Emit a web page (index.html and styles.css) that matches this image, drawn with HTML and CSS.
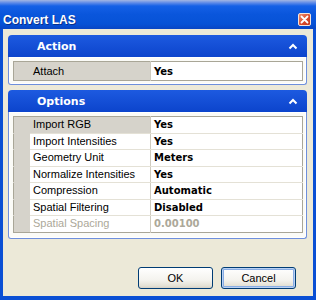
FILE: index.html
```html
<!DOCTYPE html>
<html lang="en">
<head>
    <meta charset="UTF-8">
    <title>Convert LAS</title>
    <link rel="stylesheet" href="styles.css">
</head>
<body>

    <div class="ventana">
        <div class="barra-titulo">
            <span class="titulo">Convert LAS</span>
            <span class="cerrar">
                <svg width="9" height="9" viewBox="0 0 9 9">
                    <path d="M1.5 1.5 L7.5 7.5 M7.5 1.5 L1.5 7.5" stroke="#fff" stroke-width="1.8" stroke-linecap="round"/>
                </svg>
            </span>
        </div>

        <div class="cliente">
            <div class="panel accion">
                <div class="panel-cabecera">
                    <span>Action</span>
                    <svg class="chevron" width="10" height="7" viewBox="0 0 10 7">
                        <polyline points="1.5,5.5 5,2 8.5,5.5" fill="none" stroke="#fff" stroke-width="2"/>
                    </svg>
                </div>
                <div class="panel-cuerpo">
                    <table class="rejilla">
                        <tr class="activa">
                            <td class="margen"></td>
                            <td class="nombre">Attach</td>
                            <td class="valor">Yes</td>
                        </tr>
                    </table>
                </div>
            </div>

            <div class="panel opciones">
                <div class="panel-cabecera">
                    <span>Options</span>
                    <svg class="chevron" width="10" height="7" viewBox="0 0 10 7">
                        <polyline points="1.5,5.5 5,2 8.5,5.5" fill="none" stroke="#fff" stroke-width="2"/>
                    </svg>
                </div>
                <div class="panel-cuerpo">
                    <table class="rejilla">
                        <tr class="activa">
                            <td class="margen"></td>
                            <td class="nombre">Import RGB</td>
                            <td class="valor">Yes</td>
                        </tr>
                        <tr>
                            <td class="margen"></td>
                            <td class="nombre">Import Intensities</td>
                            <td class="valor">Yes</td>
                        </tr>
                        <tr>
                            <td class="margen"></td>
                            <td class="nombre">Geometry Unit</td>
                            <td class="valor">Meters</td>
                        </tr>
                        <tr>
                            <td class="margen"></td>
                            <td class="nombre">Normalize Intensities</td>
                            <td class="valor">Yes</td>
                        </tr>
                        <tr>
                            <td class="margen"></td>
                            <td class="nombre">Compression</td>
                            <td class="valor">Automatic</td>
                        </tr>
                        <tr>
                            <td class="margen"></td>
                            <td class="nombre">Spatial Filtering</td>
                            <td class="valor">Disabled</td>
                        </tr>
                        <tr class="desactivada">
                            <td class="margen"></td>
                            <td class="nombre">Spatial Spacing</td>
                            <td class="valor">0.00100</td>
                        </tr>
                    </table>
                </div>
            </div>

            <div class="botones">
                <button>OK</button>
                <button class="predeterminado">Cancel</button>
            </div>
        </div>
    </div>

</body>
</html>
```

FILE: styles.css
```css
body {
    margin: 0;
    background-color: #8ea6dc;
    font-family: "Liberation Sans", Arial, sans-serif;
}

.ventana {
    width: 316px;
    height: 300px;
    display: flex;
    flex-direction: column;
    background-color: #0a4fd4;
}

.barra-titulo {
    height: 29px;
    box-sizing: border-box;
    display: flex;
    align-items: flex-end;
    justify-content: space-between;
    padding: 0 5px 2px 3px;
    background: linear-gradient(#a4b6e2 0, #5a88e8 3px, #1560e6 6px, #0a56dc 14px, #0652d6 24px, #0845c4 29px);
}

.titulo {
    color: white;
    font-weight: bold;
    font-size: 12px;
    line-height: 14px;
    text-shadow: 1px 1px 0 #0a2f8a;
}

.cerrar {
    width: 13px;
    height: 13px;
    box-sizing: border-box;
    margin-bottom: 1px;
    display: flex;
    align-items: center;
    justify-content: center;
    border: 1px solid #f4e4dc;
    border-radius: 2px;
    background: linear-gradient(135deg, #f08f6e, #d8482a 60%, #c23a1e);
}

.cliente {
    flex: 1;
    margin: 0 3px 4px 3px;
    padding: 6px 6px 7px 5px;
    background-color: #ece9d8;
    display: flex;
    flex-direction: column;
}

.panel {
    display: flex;
    flex-direction: column;
}

.panel.opciones {
    margin-top: 5px;
}

.panel-cabecera {
    height: 22px;
    box-sizing: border-box;
    display: flex;
    align-items: center;
    justify-content: space-between;
    padding: 0 9px 0 29px;
    border-radius: 4px 4px 0 0;
    background: linear-gradient(#1d5ae0, #0c44cc);
    color: white;
    font-family: "DejaVu Sans", Verdana, sans-serif;
    font-weight: bold;
    font-size: 11px;
}

.panel-cuerpo {
    padding: 4px 3px 3px 4px;
    border: 1px solid #6e8fdc;
    border-top: none;
    border-radius: 0 0 3px 3px;
    background-color: #fbfbf7;
    box-shadow: inset 0 0 0 1px #ffffff;
}

.opciones .panel-cuerpo {
    padding-bottom: 5px;
}

.rejilla {
    width: 100%;
    border-collapse: collapse;
    border: 1px solid #a9a697;
    font-size: 11px;
    table-layout: fixed;
}

.rejilla td {
    height: 15.5px;
    padding: 0 0 0 3px;
    border-bottom: 1px solid #e4e1d6;
    white-space: nowrap;
    overflow: hidden;
    line-height: 15px;
}

.accion .rejilla td {
    height: 18px;
}

.rejilla tr:last-child td {
    border-bottom: none;
}

.rejilla .margen {
    width: 16px;
    padding: 0;
    background-color: #d6d3cb;
    border-bottom-color: #d6d3cb;
}

.rejilla .nombre {
    width: 117px;
    background-color: white;
    border-right: 1px solid #cfcbbf;
    color: black;
}

.rejilla .valor {
    background-color: white;
    font-family: "DejaVu Sans", Verdana, sans-serif;
    font-weight: bold;
    font-size: 10px;
    color: black;
}

.rejilla .activa .nombre {
    background-color: #d6d3cb;
}

.rejilla .desactivada td {
    color: #aca899;
}

.botones {
    margin-top: auto;
    display: flex;
    justify-content: flex-end;
    gap: 8px;
    padding-right: 11px;
}

button {
    width: 75px;
    height: 22px;
    padding: 0;
    font-family: "Liberation Sans", Arial, sans-serif;
    font-size: 11px;
    color: black;
    border: 1px solid #003c74;
    border-radius: 3px;
    background: linear-gradient(#ffffff, #f4f3ee 60%, #e3e0d4 90%, #d6d0c5);
}

button.predeterminado {
    box-shadow: inset 0 0 0 1px #b9d1f4, inset 0 0 0 2px #89ade4;
}
```
